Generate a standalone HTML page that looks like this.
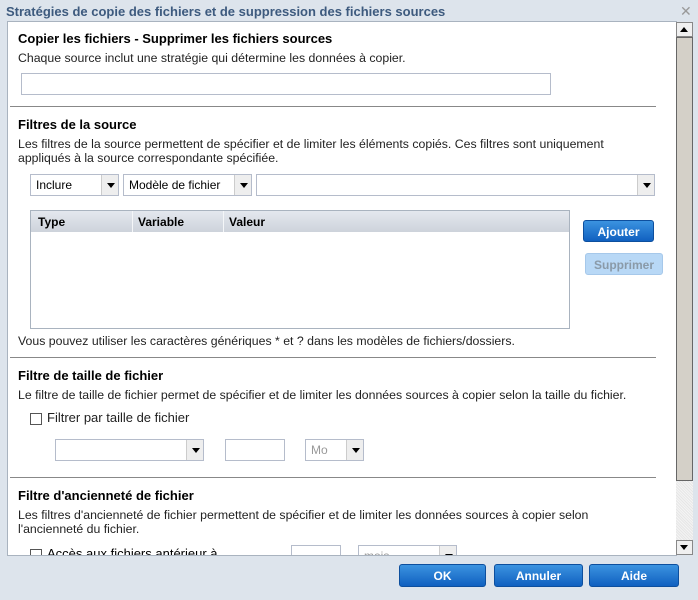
<!DOCTYPE html>
<html><head><meta charset="utf-8"><style>
*{margin:0;padding:0;box-sizing:border-box}
body{width:698px;height:600px;background:#dde4ec;font-family:"Liberation Sans",Tahoma,sans-serif;font-size:12px;color:#000;position:relative;overflow:hidden}
.a{position:absolute}
.title{left:6px;top:4px;font-weight:bold;color:#3d5a7e;font-size:13px}
.content{left:7px;top:21px;width:670px;height:535px;background:#fff;border:1px solid #a9b3bf}
h3{position:absolute;font-size:13px;font-weight:bold;left:18px}
.t{position:absolute;left:18px;font-size:12.3px;line-height:14px;color:#222}
.hr{position:absolute;left:10px;width:646px;height:1px;background:#888}
.inp{position:absolute;border:1px solid #b5bccb;background:#fff}
.sel{position:absolute;border:1px solid #b5bccb;background:#fff;font-size:12px;padding:3px 5px}
.sel i{position:absolute;right:0;top:0;bottom:0;width:17px;background:#eee;border-left:1px solid #ccc}
.sel i:after{content:"";position:absolute;left:5px;top:8px;border:4px solid transparent;border-top:5px solid #000}
.cb{position:absolute;width:12px;height:12px;border:1px solid #555;background:#fff}
.btn{position:absolute;border-radius:3px;color:#fff;font-weight:bold;font-size:12px;text-align:center;line-height:22px;background:linear-gradient(#3b93e0,#1060c0);border:1px solid #0d4f9e}
</style></head><body>
<div class="a title">Stratégies de copie des fichiers et de suppression des fichiers sources</div>
<div class="a" style="left:680px;top:3px;color:#999;font-size:14px">✕</div>
<div class="a content"></div>
<h3 style="top:31px">Copier les fichiers - Supprimer les fichiers sources</h3>
<div class="t" style="top:51px">Chaque source inclut une stratégie qui détermine les données à copier.</div>
<div class="inp" style="left:21px;top:73px;width:530px;height:22px"></div>
<div class="hr" style="top:106px;left:10px"></div>
<h3 style="top:117px">Filtres de la source</h3>
<div class="t" style="top:137px;width:600px">Les filtres de la source permettent de spécifier et de limiter les éléments copiés. Ces filtres sont uniquement appliqués à la source correspondante spécifiée.</div>
<div class="sel" style="left:30px;top:174px;width:89px;height:22px">Inclure<i></i></div>
<div class="sel" style="left:123px;top:174px;width:129px;height:22px">Modèle de fichier<i></i></div>
<div class="sel" style="left:256px;top:174px;width:399px;height:22px"><i></i></div>
<div class="a" style="left:30px;top:210px;width:540px;height:119px;border:1px solid #a9b3bf;background:#fff">
<div style="height:21px;background:linear-gradient(#e4e8ee,#cdd3db);font-weight:bold;font-size:12px;position:relative">
<span class="a" style="left:7px;top:4px">Type</span>
<span class="a" style="left:101px;top:0;height:21px;border-left:1px solid #f4f6f8"></span>
<span class="a" style="left:107px;top:4px">Variable</span>
<span class="a" style="left:192px;top:0;height:21px;border-left:1px solid #f4f6f8"></span>
<span class="a" style="left:198px;top:4px">Valeur</span>
</div></div>
<div class="btn" style="left:583px;top:220px;width:71px;height:22px">Ajouter</div>
<div class="btn" style="left:585px;top:253px;width:78px;height:22px;background:#b8d8f6;border-color:#a6c8ea;color:#8a9aa8">Supprimer</div>
<div class="t" style="top:334px">Vous pouvez utiliser les caractères génériques * et ? dans les modèles de fichiers/dossiers.</div>
<div class="hr" style="top:357px"></div>
<h3 style="top:368px">Filtre de taille de fichier</h3>
<div class="t" style="top:388px">Le filtre de taille de fichier permet de spécifier et de limiter les données sources à copier selon la taille du fichier.</div>
<div class="cb" style="left:30px;top:413px"></div>
<div class="t" style="left:47px;top:411px;font-size:13px">Filtrer par taille de fichier</div>
<div class="sel" style="left:55px;top:439px;width:149px;height:22px"><i></i></div>
<div class="inp" style="left:225px;top:439px;width:60px;height:22px"></div>
<div class="sel" style="left:305px;top:439px;width:59px;height:22px;color:#999">Mo<i></i></div>
<div class="hr" style="top:477px"></div>
<h3 style="top:488px">Filtre d'ancienneté de fichier</h3>
<div class="t" style="top:508px;width:600px">Les filtres d'ancienneté de fichier permettent de spécifier et de limiter les données sources à copier selon l'ancienneté du fichier.</div>
<div class="a" style="left:8px;top:544px;width:668px;height:11px;overflow:hidden">
<div class="cb" style="left:22px;top:5px"></div>
<div class="a" style="left:39px;top:2px;font-size:13px">Accès aux fichiers antérieur à</div>
<div class="inp" style="left:283px;top:1px;width:50px;height:22px"></div>
<div class="sel" style="left:350px;top:1px;width:99px;height:22px;color:#999">mois<i></i></div>
</div>
<div class="a" style="left:676px;top:22px;width:17px;height:533px;background:repeating-linear-gradient(45deg,#e6e6e6 0 1px,#f4f4f4 1px 2px)">
<div class="a" style="left:0;top:0;width:17px;height:15px;background:#f0f0f0;border:1px solid #888"></div>
<div class="a" style="left:4px;top:5px;border:4px solid transparent;border-bottom:5px solid #000;border-top:0"></div>
<div class="a" style="left:0;top:15px;width:17px;height:444px;background:#d4d0c8;border:1px solid #666"></div>
<div class="a" style="left:0;top:518px;width:17px;height:15px;background:#f0f0f0;border:1px solid #888"></div>
<div class="a" style="left:4px;top:523px;border:4px solid transparent;border-top:5px solid #000;border-bottom:0"></div>
</div>
<div class="btn" style="left:399px;top:564px;width:87px;height:23px">OK</div>
<div class="btn" style="left:494px;top:564px;width:89px;height:23px">Annuler</div>
<div class="btn" style="left:589px;top:564px;width:90px;height:23px">Aide</div>
</body></html>
